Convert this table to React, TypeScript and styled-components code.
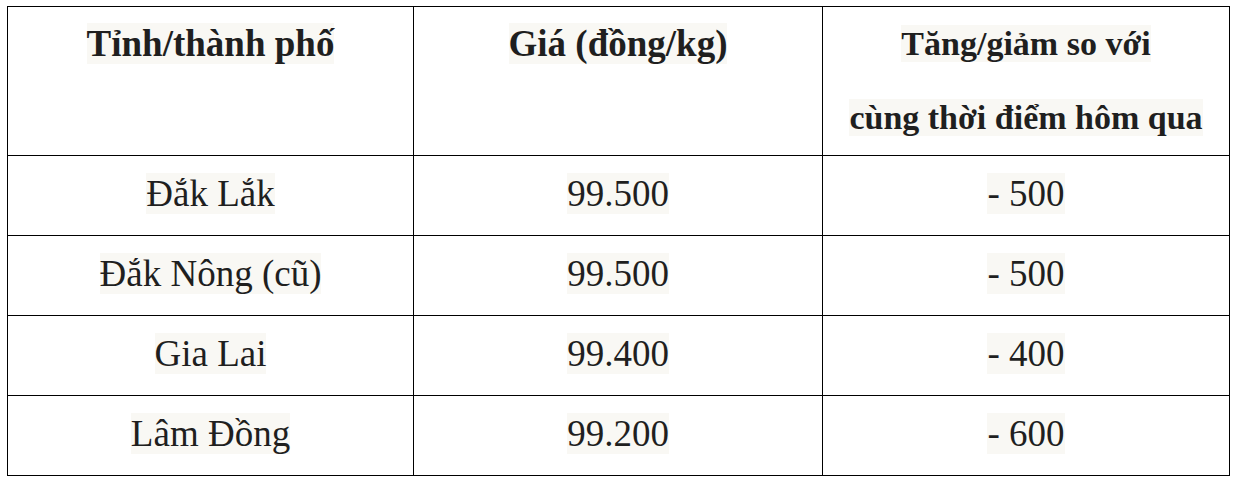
import React from 'react';
import styled, { createGlobalStyle } from 'styled-components';

const GlobalStyle = createGlobalStyle`
  html, body {
    margin: 0;
    padding: 0;
    background: #ffffff;
  }
  body {
    font-family: "Liberation Serif", "Times New Roman", serif;
    color: #1f1f1f;
  }
`;

const Page = styled.div`
  padding: 6px 9px 8px 7px;
`;

const PriceTable = styled.table`
  width: 1222px;
  border-collapse: collapse;
  table-layout: fixed;
  font-family: "Liberation Serif", "Times New Roman", serif;
`;

const HeadCell = styled.th<{ $small?: boolean }>`
  border: 1.5px solid #000;
  height: 148px;
  padding: 0;
  vertical-align: top;
  text-align: center;
  font-size: ${({ $small }) => ($small ? '34px' : '37px')};
  font-weight: 700;
  line-height: 74px;
`;

const Cell = styled.td`
  border: 1.5px solid #000;
  height: 75px;
  padding: 0 0 4px;
  vertical-align: middle;
  text-align: center;
  font-size: 37px;
  font-weight: 400;
  line-height: 74px;
`;

const Mark = styled.span`
  background: #f9f8f4;
`;

type Row = {
  province: string;
  price: string;
  change: string;
};

const rows: Row[] = [
  { province: 'Đắk Lắk', price: '99.500', change: '- 500' },
  { province: 'Đắk Nông (cũ)', price: '99.500', change: '- 500' },
  { province: 'Gia Lai', price: '99.400', change: '- 400' },
  { province: 'Lâm Đồng', price: '99.200', change: '- 600' },
];

const App: React.FC = () => {
  return (
    <Page>
      <GlobalStyle />
      <PriceTable>
        <colgroup>
          <col style={{ width: 406 }} />
          <col style={{ width: 409 }} />
          <col style={{ width: 407 }} />
        </colgroup>
        <thead>
          <tr>
            <HeadCell>
              <Mark>Tỉnh/thành phố</Mark>
            </HeadCell>
            <HeadCell>
              <Mark>Giá (đồng/kg)</Mark>
            </HeadCell>
            <HeadCell $small>
              <Mark>Tăng/giảm so với</Mark>
              <br />
              <Mark>cùng thời điểm hôm qua</Mark>
            </HeadCell>
          </tr>
        </thead>
        <tbody>
          {rows.map((row) => (
            <tr key={row.province}>
              <Cell>
                <Mark>{row.province}</Mark>
              </Cell>
              <Cell>
                <Mark>{row.price}</Mark>
              </Cell>
              <Cell>
                <Mark>{row.change}</Mark>
              </Cell>
            </tr>
          ))}
        </tbody>
      </PriceTable>
    </Page>
  );
};

export default App;
